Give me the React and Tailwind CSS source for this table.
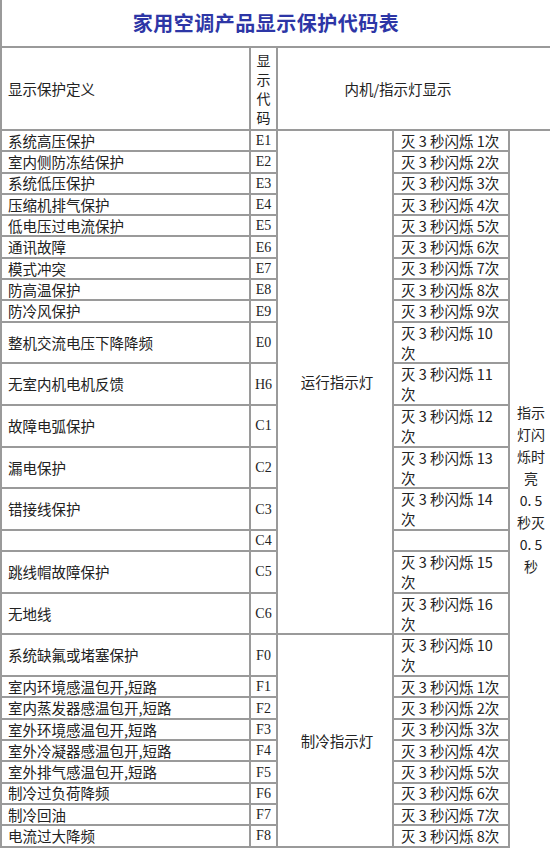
import React from "react";

const cjk = { fontFamily: '"Noto Sans CJK SC", "Noto Sans", sans-serif' };

const rows = [
  { name: "系统高压保护", code: "E1", n: "1" },
  { name: "室内侧防冻结保护", code: "E2", n: "2" },
  { name: "系统低压保护", code: "E3", n: "3" },
  { name: "压缩机排气保护", code: "E4", n: "4" },
  { name: "低电压过电流保护", code: "E5", n: "5" },
  { name: "通讯故障", code: "E6", n: "6" },
  { name: "模式冲突", code: "E7", n: "7" },
  { name: "防高温保护", code: "E8", n: "8" },
  { name: "防冷风保护", code: "E9", n: "9" },
  { name: "整机交流电压下降降频", code: "E0", n: "10", tall: true },
  { name: "无室内机电机反馈", code: "H6", n: "11", tall: true },
  { name: "故障电弧保护", code: "C1", n: "12", tall: true },
  { name: "漏电保护", code: "C2", n: "13", tall: true },
  { name: "错接线保护", code: "C3", n: "14", tall: true },
  { name: "", code: "C4", n: "" },
  { name: "跳线帽故障保护", code: "C5", n: "15", tall: true },
  { name: "无地线", code: "C6", n: "16", tall: true },
  { name: "系统缺氟或堵塞保护", code: "F0", n: "10", tall: true },
  { name: "室内环境感温包开,短路", code: "F1", n: "1" },
  { name: "室内蒸发器感温包开,短路", code: "F2", n: "2" },
  { name: "室外环境感温包开,短路", code: "F3", n: "3" },
  { name: "室外冷凝器感温包开,短路", code: "F4", n: "4" },
  { name: "室外排气感温包开,短路", code: "F5", n: "5" },
  { name: "制冷过负荷降频", code: "F6", n: "6" },
  { name: "制冷回油", code: "F7", n: "7" },
  { name: "电流过大降频", code: "F8", n: "8" },
];

const cell = "border-r-2 border-b-2 border-[#9a9a9a] bg-white";

function Blink({ n }) {
  if (!n) return null;
  if (n.length > 1) {
    return (
      <div className="leading-[20px]">
        <div>灭 3 秒闪烁 {n}</div>
        <div>次</div>
      </div>
    );
  }
  return <div className="leading-[20px] whitespace-nowrap">灭 3 秒闪烁 {n}次</div>;
}

export default function App() {
  return (
    <div className="w-[550px] h-[850px] overflow-hidden bg-white text-[#222]" style={cjk}>
      <div className="h-[48px] border-l-2 border-b-2 border-[#9a9a9a] flex items-center justify-center pr-5">
        <h1 className="text-[20px] font-bold text-[#2d36a6] tracking-[0.5px]">家用空调产品显示保护代码表</h1>
      </div>

      <div className="grid grid-cols-[249px_27px_116px_116px_42px] grid-rows-[83px_repeat(9,21.3px)_repeat(5,41.7px)_21px_repeat(3,41.7px)_repeat(8,21.3px)] border-l-2 border-[#9a9a9a] text-[14.5px]">
        <div className={`${cell} row-start-1 col-start-1 flex items-center pl-[6px]`}>显示保护定义</div>
        <div className={`${cell} row-start-1 col-start-2 flex flex-col items-center justify-center leading-[19px] text-[14px]`}>
          <span>显</span>
          <span>示</span>
          <span>代</span>
          <span>码</span>
        </div>
        <div className={`${cell} row-start-1 col-start-3 col-span-3 flex items-center justify-center pr-8 border-r-0`}>
          内机/指示灯显示
        </div>

        <div className={`${cell} row-start-2 row-span-17 col-start-3 flex items-center justify-center pl-1`}>运行指示灯</div>
        <div className={`${cell} row-start-19 row-span-9 col-start-3 flex items-center justify-center pl-1`}>制冷指示灯</div>
        <div className="row-start-2 row-span-26 col-start-5 flex flex-col items-center justify-center leading-[22px] text-[14px] bg-white">
          <span>指示</span>
          <span>灯闪</span>
          <span>烁时</span>
          <span>亮</span>
          <span>0. 5</span>
          <span>秒灭</span>
          <span>0. 5</span>
          <span>秒</span>
        </div>

        {rows.map((r) => (
          <React.Fragment key={r.code}>
            <div className={`${cell} col-start-1 flex items-center pl-[6px] whitespace-nowrap overflow-hidden`}>{r.name}</div>
            <div
              className={`${cell} col-start-2 flex items-center justify-center text-[14px]`}
              style={{ fontFamily: '"Liberation Serif", serif' }}
            >
              {r.code}
            </div>
            <div className={`${cell} col-start-4 flex items-center pl-[7px] overflow-hidden`}>
              <Blink n={r.n} />
            </div>
          </React.Fragment>
        ))}
      </div>
    </div>
  );
}
